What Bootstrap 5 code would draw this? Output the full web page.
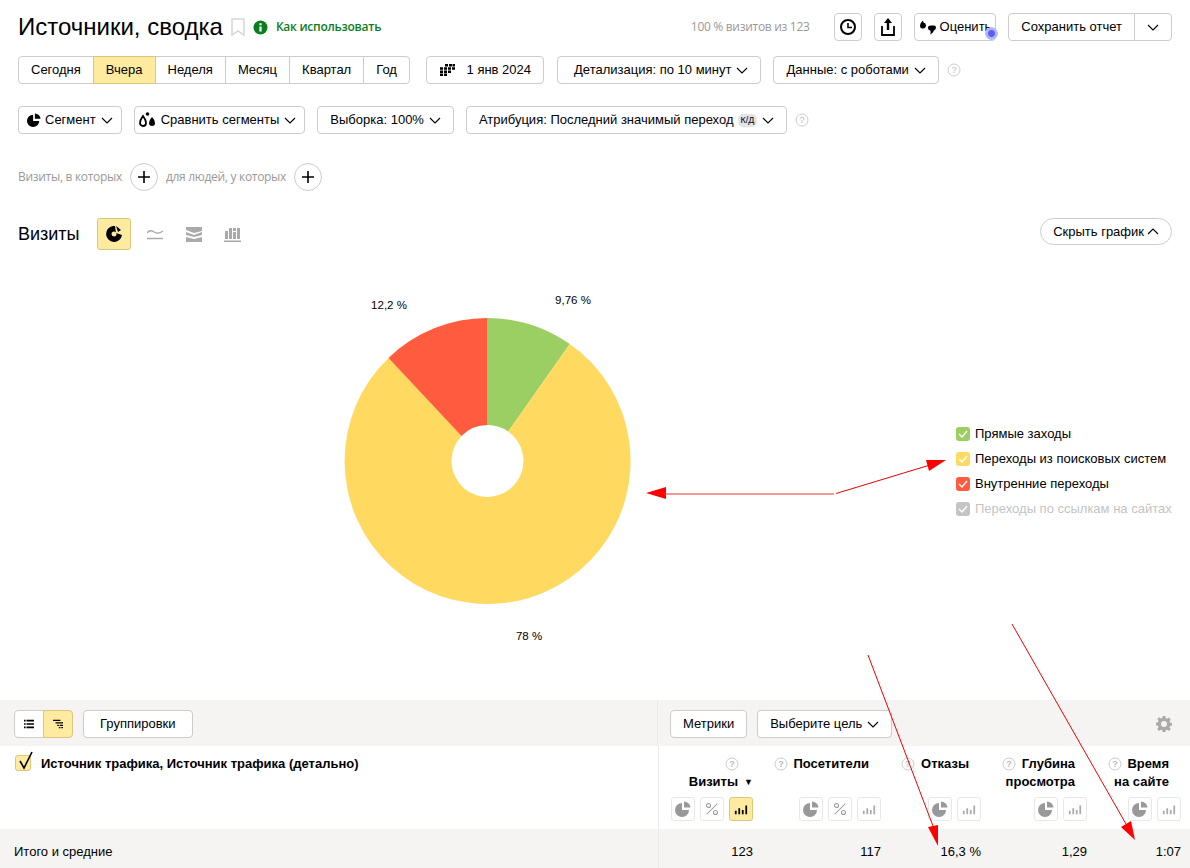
<!DOCTYPE html>
<html lang="ru">
<head>
<meta charset="UTF-8">
<title>Источники, сводка</title>
<link href="https://cdn.jsdelivr.net/npm/bootstrap@5.3.0/dist/css/bootstrap.min.css" rel="stylesheet">
<style>
html, body { height: 868px; overflow: hidden; }
body { position: relative; font-family: "Liberation Sans", Arial, sans-serif; font-size: 13px; color: #000; background: #fff; }
.ym-top { padding: 13px 18px 0; }
.ym-title { font-size: 24px; line-height: 28px; font-weight: 400; margin: 0; }
.ym-howto { color: #0a7d1e; font: 600 12px/28px "Open Sans", sans-serif; letter-spacing: -.25px; }
.ym-gray { color: #999; }
.ym-narrow { font-family: "Open Sans", sans-serif; font-size: 12px; letter-spacing: -.3px; }
.ym-btn { height: 28px; padding: 0 12px; font-size: 13px; line-height: 26px; color: #000; background: #fff; border: 1px solid #ccc; border-radius: 4px; white-space: nowrap; display: inline-flex; align-items: center; }
.ym-btn:hover { background: #fff; border-color: #bbb; }
.ym-btn.btn-group-item { border-radius: 0; margin-left: -1px; }
.ym-btn.btn-group-item:first-child { border-radius: 4px 0 0 4px; margin-left: 0; }
.ym-btn.btn-group-item:last-child { border-radius: 0 4px 4px 0; }
.ym-on, .ym-on:hover { background: #ffeba0; border-color: #d9c77f; position: relative; z-index: 1; }
.ym-square { width: 28px; padding: 0; justify-content: center; }
.ym-dd { width: 12px; height: 7px; margin-left: 5px; flex: none; }
.ym-help { width: 14px; height: 14px; flex: none; }
.ym-round { width: 28px; height: 28px; border: 1px solid #ccc; border-radius: 50%; display: inline-flex; align-items: center; justify-content: center; padding: 0; background: #fff; }
.ym-pulse { position: absolute; top: 13px; left: 70px; width: 13px; height: 13px; border-radius: 50%; background: radial-gradient(circle, #5a5ff0 0 3px, #b3b5f8 4px 6px, transparent 7px); }
.ym-kd { background: #e4e4e4; border-radius: 5px; font-size: 9px; line-height: 13px; padding: 0 3px; margin-left: 4px; }
.ym-row2 { margin-top: 15px; }
.ym-row3 { margin-top: 22px; }
.ym-row4 { margin-top: 29px; }
.ym-row5 { margin-top: 27px; height: 32px; }
.ym-h2 { font-size: 18px; font-weight: 400; margin: 0; line-height: 32px; width: 79px; }
.ym-chartbtn { width: 34px; height: 32px; padding: 0; border-radius: 3px; display: flex; align-items: center; justify-content: center; border: 1px solid #d9c77f; background: #ffeba0; }
.ym-charticon { width: 39px; display: flex; justify-content: center; }
.ym-pill { height: 27px; padding: 0 12px; border-radius: 14px; align-self: flex-start; }
.ym-chart { height: 438px; margin-top: 12px; }
.ym-legend { margin: 159px 0 0 16px; }
.ym-legend li { height: 25px; line-height: 25px; }
.ym-legend-box { width: 14px; height: 14px; border-radius: 3px; flex: none; margin-right: 5px; display: flex; align-items: center; justify-content: center; }
.ym-toolbar { background: #f5f4f2; height: 46px; }
.ym-left { width: 658px; padding: 10px 14px 0; border-right: 1px solid #eceae6; flex: none; }
.ym-right { padding: 10px 18px 0 12px; }
.ym-mini { padding: 0 9px; width: 30px; justify-content: center; }
.ym-table { --bs-table-bg: #fff; table-layout: fixed; width: 1190px; }
.ym-table>:not(caption)>*>* { padding: 0; box-shadow: none; color: #000; }
.ym-table th { padding: 9px 9px 8px 0; text-align: right; vertical-align: top; font-size: 13px; line-height: 18px; }
.ym-table th.ym-dim { padding: 9px 14px 8px 15px; text-align: left; border-right: 1px solid #eceae6; }
.ym-table td { padding: 14px 9px 14px 0; text-align: right; line-height: 18px; }
.ym-table td.ym-dim { padding-left: 14px; text-align: left; border-right: 1px solid #eceae6; }
.ym-totals { --bs-table-bg: #f5f4f2; }
.ym-metric { height: 36px; padding-right: 12px; margin-bottom: 6px; }
.ym-metric .ym-help { vertical-align: -3px; margin-right: 2px; }
.ym-sort { font-size: 9px; margin: 0 -12px 0 6px; vertical-align: 1px; }
.ym-modes { gap: 5px; }
.ym-mode { width: 24px; height: 24px; border: 1px solid #e8e8e8; border-radius: 3px; display: flex; align-items: center; justify-content: center; background: #fff; }
.ym-mode.ym-on { background: #ffeba0; border-color: #d9c77f; }
.ym-check { width: 16px; height: 16px; border: 1px solid #d9c77f; background: #ffeba0; border-radius: 3px; flex: none; position: relative; margin-right: 10px; }
.ym-check svg { position: absolute; left: 1px; top: -5px; }
.ym-arrows { position: absolute; left: 0; top: 0; pointer-events: none; }
</style>
</head>
<body>

<svg class="d-none">
  <symbol id="i-dd" viewBox="0 0 12 7"><path d="M1 1l5 5 5-5" fill="none" stroke="#000" stroke-width="1.1"/></symbol>
  <symbol id="i-help" viewBox="0 0 14 14"><circle cx="7" cy="7" r="6" fill="none" stroke="#ccc"/><text x="7" y="10" font-size="9" text-anchor="middle" fill="#bbb" font-family="Liberation Sans">?</text></symbol>
  <symbol id="i-pie" viewBox="0 0 16 16"><path d="M7 2a7 7 0 1 0 7 7H7z"/><path d="M9 0.5v6h6.5A6.5 6.5 0 0 0 9 .5z"/></symbol>
  <symbol id="i-pct" viewBox="0 0 16 16"><circle cx="4" cy="4" r="2.3" fill="none" stroke="currentColor" stroke-width="1.2"/><circle cx="12" cy="12" r="2.3" fill="none" stroke="currentColor" stroke-width="1.2"/><path d="M2 14L14 2" stroke="currentColor" stroke-width="1.2"/></symbol>
  <symbol id="i-bars" viewBox="0 0 16 16"><path d="M1 10h2v4H1zM5 7h2v7H5zM9 9h2v5H9zM13 4h2v10h-2z"/></symbol>
  <symbol id="i-plus" viewBox="0 0 12 12"><path d="M6 0v12M0 6h12" stroke="#000" stroke-width="1.6"/></symbol>
</svg>

<div class="ym-top">
  <div class="d-flex align-items-center">
    <h1 class="ym-title">Источники, сводка</h1>
    <svg class="ms-2" width="14" height="18" viewBox="0 0 14 18"><path d="M1 1h12v16l-6-4-6 4z" fill="none" stroke="#d5d5d5" stroke-width="1.5"/></svg>
    <svg class="ms-2 me-1" width="15" height="15" viewBox="0 0 15 15"><circle cx="7.5" cy="7.5" r="7" fill="#0a7d1e"/><path d="M6.4 6.4h2.2v5H6.4zM6.4 3.2h2.2v2H6.4z" fill="#fff"/></svg>
    <a class="ym-howto text-decoration-none ms-1" href="#">Как использовать</a>
    <span class="ym-gray ym-narrow ms-auto me-3 pe-1">100 % визитов из 123</span>
    <button class="btn ym-btn ym-square me-2 ms-1" type="button">
      <svg width="18" height="18" viewBox="0 0 18 18"><circle cx="9" cy="9" r="7" fill="none" stroke="#000" stroke-width="2"/><path d="M9 5v4.500h4" fill="none" stroke="#000" stroke-width="1.600"/></svg>
    </button>
    <button class="btn ym-btn ym-square ms-1 me-2" type="button">
      <svg width="14" height="18" viewBox="0 0 14 18"><path d="M7 0l4 5H8.200v7H5.800V5H3z"/><path d="M1 8v9h12V8" fill="none" stroke="#000" stroke-width="1.800"/></svg>
    </button>
    <button class="btn ym-btn position-relative ms-1 me-2 ps-1 pe-1" type="button">
      <svg class="me-1" width="17" height="15" viewBox="0 0 17 15"><path d="M1 5.500Q1 3 4 .5l.5 2Q7 3 7 5.500T4 8.500 1 5.500zM9 7.500q0-2 3-2h3q2 0 2 2t-2 3q-1 3-4 4 1-2 .500-4-2.500 0-2.500-3z"/></svg>Оценить<span class="ym-pulse"></span>
    </button>
    <div class="btn-group ms-1" role="group">
      <button class="btn ym-btn btn-group-item" type="button">Сохранить отчет</button>
      <button class="btn ym-btn btn-group-item" type="button"><svg class="ym-dd mx-0" width="12" height="7"><use href="#i-dd"/></svg></button>
    </div>
  </div>

  <div class="d-flex align-items-center ym-row2">
    <div class="btn-group" role="group">
      <button class="btn ym-btn btn-group-item" type="button">Сегодня</button>
      <button class="btn ym-btn btn-group-item ym-on" type="button">Вчера</button>
      <button class="btn ym-btn btn-group-item" type="button">Неделя</button>
      <button class="btn ym-btn btn-group-item" type="button">Месяц</button>
      <button class="btn ym-btn btn-group-item" type="button">Квартал</button>
      <button class="btn ym-btn btn-group-item" type="button">Год</button>
    </div>
    <button class="btn ym-btn ms-3" type="button">
      <svg class="me-2" width="16" height="12" viewBox="0 0 16 12"><path d="M6 0h3v2.500H6zM10 0h3v2.500h-3zM13.500 0H16v2.500h-2.500zM1 3.200h3v2.500H1zM5 3.200h3v2.500H5zM9 3.200h3v2.500H9zM13 3.200h3v2.500h-3zM1 6.400h3v2.500H1zM5 6.400h3v2.500H5zM9 6.400h3v2.500H9zM1 9.500h3V12H1zM5 9.500h3V12H5z"/></svg>&nbsp;1 янв 2024
    </button>
    <button class="btn ym-btn ms-2 me-2 ps-3" type="button" style="margin-left:13px !important">Детализация: по 10 минут<svg class="ym-dd"><use href="#i-dd"/></svg></button>
    <button class="btn ym-btn ms-1" type="button">Данные: с роботами<svg class="ym-dd"><use href="#i-dd"/></svg></button>
    <svg class="ym-help ms-2"><use href="#i-help"/></svg>
  </div>

  <div class="d-flex align-items-center ym-row3 gap-2">
    <button class="btn ym-btn me-1 px-1" type="button">
      <svg class="ms-1 me-1" width="14" height="14" fill="#000"><use href="#i-pie"/></svg>Сегмент<svg class="ym-dd me-1"><use href="#i-dd"/></svg>
    </button>
    <button class="btn ym-btn px-1 me-1" type="button">
      <svg class="me-1 ms-0" width="18" height="16" viewBox="0 0 18 16"><circle cx="8.500" cy="2" r="1.800"/><path d="M4 4q3 4 3 7a3 3 0 1 1-6 0q0-3 3-7z" fill="none" stroke="#000" stroke-width="1.800"/><path d="M13 5q3 3 3 6a3 3 0 1 1-6 0q0-3 3-6z"/></svg>Сравнить сегменты<svg class="ym-dd me-1"><use href="#i-dd"/></svg>
    </button>
    <button class="btn ym-btn me-1" type="button">Выборка: 100%<svg class="ym-dd"><use href="#i-dd"/></svg></button>
    <button class="btn ym-btn" type="button">Атрибуция: Последний значимый переход<span class="ym-kd">К/Д</span><svg class="ym-dd"><use href="#i-dd"/></svg></button>
    <svg class="ym-help"><use href="#i-help"/></svg>
  </div>

  <div class="d-flex align-items-center ym-row4">
    <span class="ym-gray ym-narrow">Визиты, в которых</span>
    <button class="ym-round ms-2 me-2" type="button"><svg width="12" height="12"><use href="#i-plus"/></svg></button>
    <span class="ym-gray ym-narrow">для людей, у которых</span>
    <button class="ym-round ms-2" type="button"><svg width="12" height="12"><use href="#i-plus"/></svg></button>
  </div>

  <div class="d-flex align-items-start ym-row5">
    <h2 class="ym-h2">Визиты</h2>
    <button class="btn ym-chartbtn" type="button">
      <svg width="18" height="18" viewBox="0 0 18 18"><path fill-rule="evenodd" d="M8 1a8 8 0 1 0 9 9l-6-2-1-7zM9 6.500a2.500 2.500 0 1 1 0 5 2.500 2.500 0 0 1 0-5z"/><path d="M11 1l5 4-3 2z"/></svg>
    </button>
    <div class="d-flex ms-1 align-self-center" style="gap:0">
      <span class="ym-charticon"><svg width="16" height="13" viewBox="0 0 16 13"><path d="M0 6q3-4 7-1t9-1M0 11.500h16" fill="none" stroke="#aaa" stroke-width="1.300"/></svg></span>
      <span class="ym-charticon"><svg width="16" height="15" viewBox="0 0 16 15" fill="#aaa"><path d="M0 0h16v4L8 6 0 3zM0 5l8 3 8-3v3l-8 2-8-2zM0 10l8 2 8-2v5H0z"/></svg></span>
      <span class="ym-charticon"><svg width="17" height="15" viewBox="0 0 17 15" fill="#aaa"><path d="M1 4h3v8H1zM5 1h3v11H5zM9 5h3v7H9zM9 1h3v3H9zM13 1h3v11h-3zM0 13.500h17V15H0z"/></svg></span>
    </div>
    <button class="btn ym-btn ym-pill ms-auto" type="button">Скрыть график<svg class="ym-dd" style="transform:rotate(180deg);margin-left:3px"><use href="#i-dd"/></svg></button>
  </div>
</div>

<div class="d-flex ym-chart">
  <svg width="940" height="438" viewBox="0 262 940 438" class="flex-none">
    <path d="M487.500 318A143 143 0 0 1 569.800 344L508.200 431.500A36 36 0 0 0 487.500 425Z" fill="#9bcf63"/>
    <path d="M569.800 344A143 143 0 1 1 388.500 357.900L461.500 436A36 36 0 1 0 508.200 431.500Z" fill="#ffd960"/>
    <path d="M388.500 357.900A143 143 0 0 1 487.500 318V425A36 36 0 0 0 461.500 436Z" fill="#ff5b3e"/>
    <g font-family="Liberation Sans" font-size="11.500" text-anchor="middle" fill="#000">
      <text x="573" y="304">9,76 %</text>
      <text x="389" y="309">12,2 %</text>
      <text x="529" y="640">78 %</text>
    </g>
  </svg>
  <ul class="list-unstyled ym-legend">
    <li class="d-flex align-items-center"><span class="ym-legend-box" style="background:#9bcf63"><svg width="10" height="8"><path d="M1 4l3 3 5-6" fill="none" stroke="#fff" stroke-width="1.400"/></svg></span>Прямые заходы</li>
    <li class="d-flex align-items-center"><span class="ym-legend-box" style="background:#ffd960"><svg width="10" height="8"><path d="M1 4l3 3 5-6" fill="none" stroke="#fff" stroke-width="1.400"/></svg></span>Переходы из поисковых систем</li>
    <li class="d-flex align-items-center"><span class="ym-legend-box" style="background:#ff5b3e"><svg width="10" height="8"><path d="M1 4l3 3 5-6" fill="none" stroke="#fff" stroke-width="1.400"/></svg></span>Внутренние переходы</li>
    <li class="d-flex align-items-center" style="color:#c4c4c4"><span class="ym-legend-box" style="background:#c4c4c4"><svg width="10" height="8"><path d="M1 4l3 3 5-6" fill="none" stroke="#fff" stroke-width="1.400"/></svg></span>Переходы по ссылкам на сайтах</li>
  </ul>
</div>

<div class="d-flex ym-toolbar">
  <div class="ym-left d-flex align-items-start">
    <div class="btn-group" role="group">
      <button class="btn ym-btn btn-group-item ym-mini" type="button"><svg width="12" height="10" viewBox="0 0 12 10"><path d="M0 0h2v2H0zM3 0h9v2H3zM0 4h2v2H0zM3 4h9v2H3zM0 8h2v2H0zM3 8h9v2H3z"/></svg></button>
      <button class="btn ym-btn btn-group-item ym-mini ym-on" type="button"><svg width="12" height="10" viewBox="0 0 12 10"><path d="M0 0h9v1.500H0zM3 3h9v1.500H3zM5 6h2v1.500H5zM8 6h4v1.500H8zM7 8.500h2V10H7zM10 8.500h2V10h-2z"/></svg></button>
    </div>
    <button class="btn ym-btn ms-2 ps-3 pe-3" type="button" style="margin-left:10px !important">Группировки</button>
  </div>
  <div class="ym-right d-flex align-items-start flex-grow-1">
    <button class="btn ym-btn" type="button">Метрики</button>
    <button class="btn ym-btn ms-2" type="button" style="margin-left:10px !important">Выберите цель<svg class="ym-dd"><use href="#i-dd"/></svg></button>
    <svg class="ms-auto" style="margin-top:6px" width="16" height="16" viewBox="0 0 16 16"><path fill="#aaa" fill-rule="evenodd" d="M6.700 0h2.600l.4 2.200 1.300.6 1.900-1.300 1.800 1.900-1.200 1.900.5 1.300 2.200.4v2.600l-2.200.4-.5 1.300 1.200 1.900-1.800 1.800-1.900-1.200-1.300.5-.4 2.200H6.700l-.4-2.200-1.300-.5-1.900 1.200-1.800-1.800L2.500 11 2 9.700l-2-.4V6.700l2-.4.500-1.300-1.200-1.900 1.800-1.800L5 2.500l1.300-.5zM8 5a3 3 0 1 0 0 6 3 3 0 0 0 0-6z"/></svg>
  </div>
</div>

<table class="table table-borderless mb-0 ym-table">
  <colgroup><col style="width:658px"><col style="width:104px"><col style="width:128px"><col style="width:100px"><col style="width:106px"><col style="width:94px"></colgroup>
  <thead>
    <tr>
      <th class="ym-dim"><div class="d-flex align-items-start">
        <span class="ym-check"><svg width="18" height="20" viewBox="0 0 18 20"><path d="M3 10l4 7L15 1" fill="none" stroke="#000" stroke-width="1.600"/></svg></span>
        Источник трафика, Источник трафика (детально)
      </div></th>
      <th>
        <div class="ym-metric"><svg class="ym-help"><use href="#i-help"/></svg> Визиты<span class="ym-sort">▼</span></div>
        <div class="d-flex justify-content-end ym-modes">
          <span class="ym-mode"><svg width="16" height="16" fill="#999"><use href="#i-pie"/></svg></span>
          <span class="ym-mode"><svg width="14" height="14" color="#999"><use href="#i-pct"/></svg></span>
          <span class="ym-mode ym-on"><svg width="14" height="14" fill="#000"><use href="#i-bars"/></svg></span>
        </div>
      </th>
      <th>
        <div class="ym-metric"><svg class="ym-help"><use href="#i-help"/></svg> Посетители</div>
        <div class="d-flex justify-content-end ym-modes">
          <span class="ym-mode"><svg width="16" height="16" fill="#999"><use href="#i-pie"/></svg></span>
          <span class="ym-mode"><svg width="14" height="14" color="#999"><use href="#i-pct"/></svg></span>
          <span class="ym-mode"><svg width="14" height="14" fill="#aaa"><use href="#i-bars"/></svg></span>
        </div>
      </th>
      <th>
        <div class="ym-metric"><svg class="ym-help"><use href="#i-help"/></svg> Отказы</div>
        <div class="d-flex justify-content-end ym-modes">
          <span class="ym-mode"><svg width="16" height="16" fill="#999"><use href="#i-pie"/></svg></span>
          <span class="ym-mode"><svg width="14" height="14" fill="#aaa"><use href="#i-bars"/></svg></span>
        </div>
      </th>
      <th>
        <div class="ym-metric"><svg class="ym-help"><use href="#i-help"/></svg> Глубина<br>просмотра</div>
        <div class="d-flex justify-content-end ym-modes">
          <span class="ym-mode"><svg width="16" height="16" fill="#999"><use href="#i-pie"/></svg></span>
          <span class="ym-mode"><svg width="14" height="14" fill="#aaa"><use href="#i-bars"/></svg></span>
        </div>
      </th>
      <th>
        <div class="ym-metric"><svg class="ym-help"><use href="#i-help"/></svg> Время<br>на сайте</div>
        <div class="d-flex justify-content-end ym-modes">
          <span class="ym-mode"><svg width="16" height="16" fill="#999"><use href="#i-pie"/></svg></span>
          <span class="ym-mode"><svg width="14" height="14" fill="#aaa"><use href="#i-bars"/></svg></span>
        </div>
      </th>
    </tr>
  </thead>
  <tbody>
    <tr class="ym-totals">
      <td class="ym-dim">Итого и средние</td>
      <td>123</td><td>117</td><td>16,3 %</td><td>1,29</td><td>1:07</td>
    </tr>
  </tbody>
</table>

<!-- red annotation arrows drawn over the screenshot -->
<svg class="ym-arrows" width="1190" height="868" viewBox="0 0 1190 868">
  <g fill="#f00">
    <path d="M646 493l20-6v12z"/>
    <path d="M946 460l-20 0 3 11z"/>
    <path d="M938 846l-10-19 10-2z"/>
    <path d="M1135 840l-14-13 10-6z"/>
  </g>
  <path d="M834 494H664" stroke="#e33" stroke-width="1.200" fill="none"/>
  <path d="M836 493.500L930 465M868 655L933 826M1012 624L1126 824" stroke="#e00" stroke-width="1" fill="none"/>
</svg>

<script src="https://cdn.jsdelivr.net/npm/bootstrap@5.3.0/dist/js/bootstrap.bundle.min.js"></script>
</body>
</html>
